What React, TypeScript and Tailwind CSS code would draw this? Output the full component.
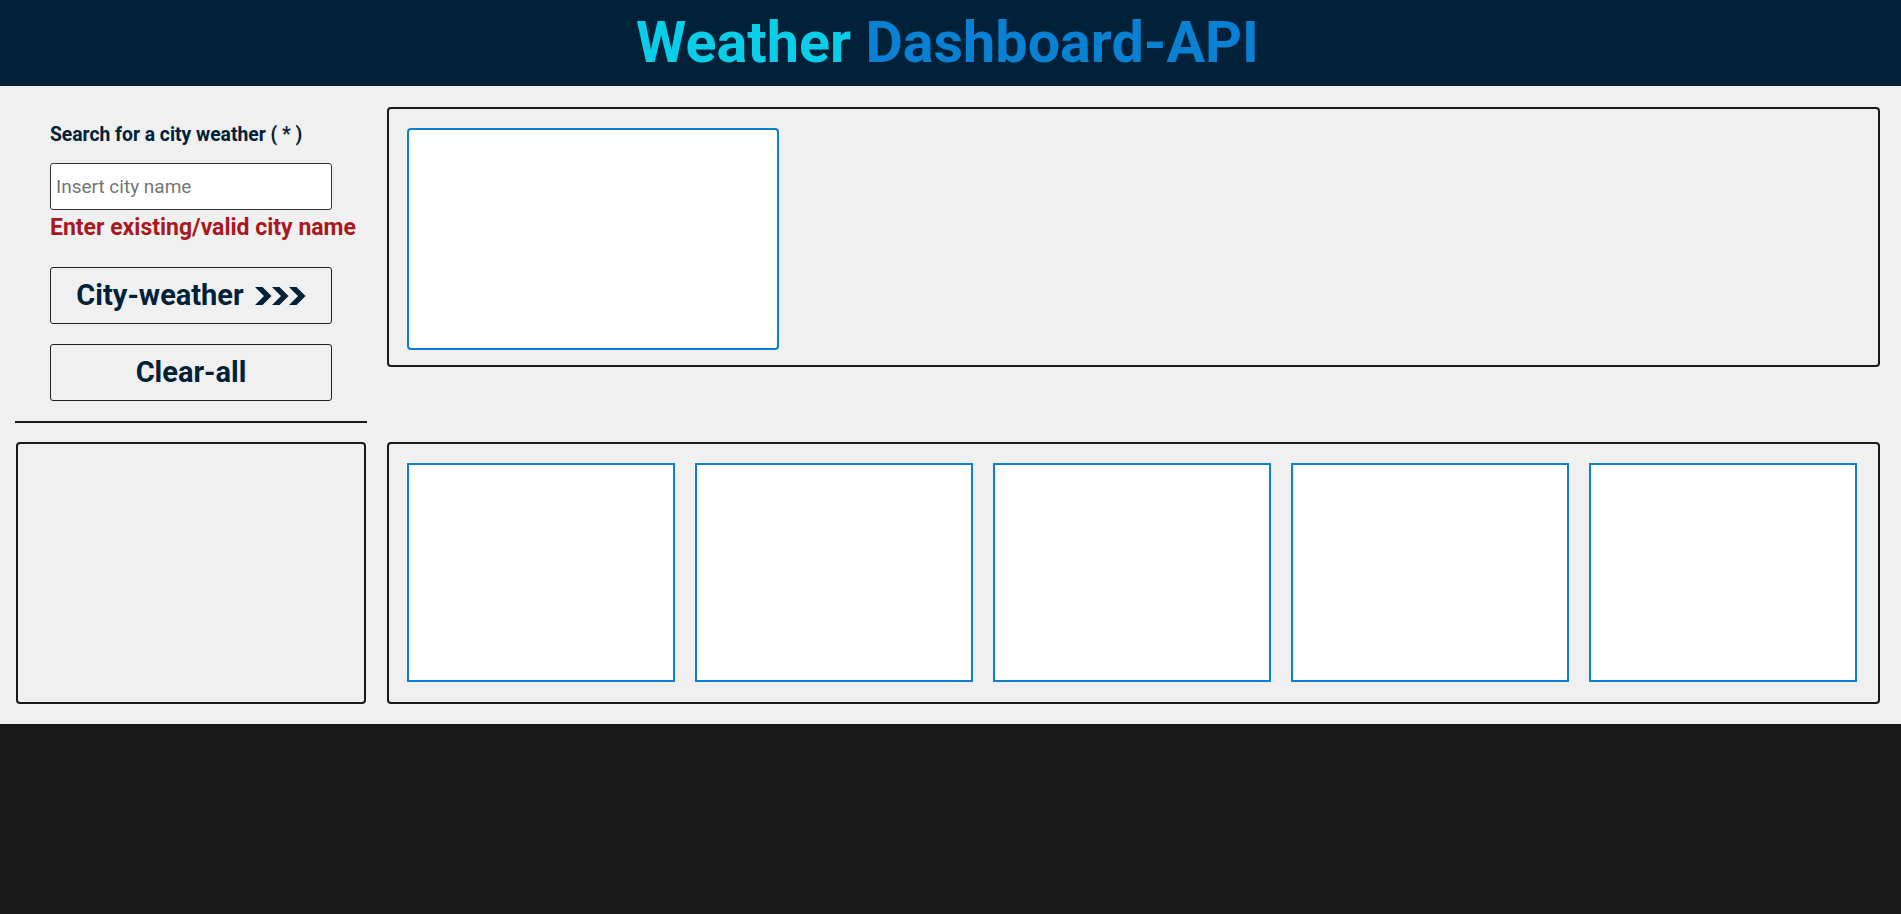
import React from "react";

function Chevrons() {
  const offs = [0, 17, 34];
  return (
    <svg width="51" height="18" viewBox="0 0 51 18" className="inline-block" fill="currentColor" aria-hidden="true">
      {offs.map((o) => (
        <polygon
          key={o}
          points={`${o},0 ${o + 7.5},0 ${o + 16.5},9 ${o + 7.5},18 ${o},18 ${o + 9},9`}
        />
      ))}
    </svg>
  );
}

export default function App() {
  const widths = [268, 278, 278, 278, 268];
  return (
    <div className="min-h-[914px] bg-[#181818] font-['Roboto',_'Liberation_Sans',_sans-serif]">
      <header className="h-[86px] bg-[#002138] flex items-center justify-center pr-[6px]">
        <h1 className="text-[57.5px] font-bold leading-none">
          <span className="text-[#0bcde8]">Weather</span>{" "}
          <span className="text-[#0a80d2]">Dashboard-API</span>
        </h1>
      </header>
      <main className="bg-[#f0f0f0] pl-[15px] pr-[21px] pt-[21px] pb-[20px] grid grid-cols-[352px_1fr] gap-x-[20px] gap-y-[19px] items-start">
        <section className="flex flex-col">
          <div className="w-[282px] mx-auto flex flex-col">
            <label className="mt-[16px] text-[19.3px] leading-[24px] font-bold text-[#002138]">
              Search for a city weather ( * )
            </label>
            <input
              type="text"
              placeholder="Insert city name"
              className="mt-[16px] h-[47px] w-full bg-white border border-[#333] rounded-[3px] px-[5px] text-[19px] text-[#002138] placeholder:text-[#757575] outline-none"
            />
            <p className="mt-[4px] text-[23px] leading-[28px] font-bold text-[#a8181c] whitespace-nowrap">
              Enter existing/valid city name
            </p>
            <button className="mt-[25px] h-[57px] w-full border border-[#222] rounded-[3px] text-[29px] font-bold text-[#002138] flex items-center justify-center gap-[11px]">
              <span>City-weather</span>
              <Chevrons />
            </button>
            <button className="mt-[20px] h-[57px] w-full border border-[#222] rounded-[3px] text-[29px] font-bold text-[#002138]">
              Clear-all
            </button>
          </div>
          <hr className="mt-[20px] border-0 h-[2px] bg-[#1a1a1a]" />
        </section>
        <section className="h-[260px] border-2 border-[#1a1a1a] rounded-[4px] pt-[19px] pl-[18px]">
          <div className="w-[372px] h-[222px] bg-white border-2 border-[#0a80d2] rounded-[4px]" />
        </section>
        <section className="mx-[1px] h-[262px] border-2 border-[#1a1a1a] rounded-[4px]" />
        <section className="h-[262px] border-2 border-[#1a1a1a] rounded-[4px] pt-[19px] pl-[18px] flex gap-[20px]">
          {widths.map((w, i) => (
            <div
              key={i}
              className="h-[219px] bg-white border-2 border-[#0a80d2]"
              style={{ width: w }}
            />
          ))}
        </section>
      </main>
    </div>
  );
}
